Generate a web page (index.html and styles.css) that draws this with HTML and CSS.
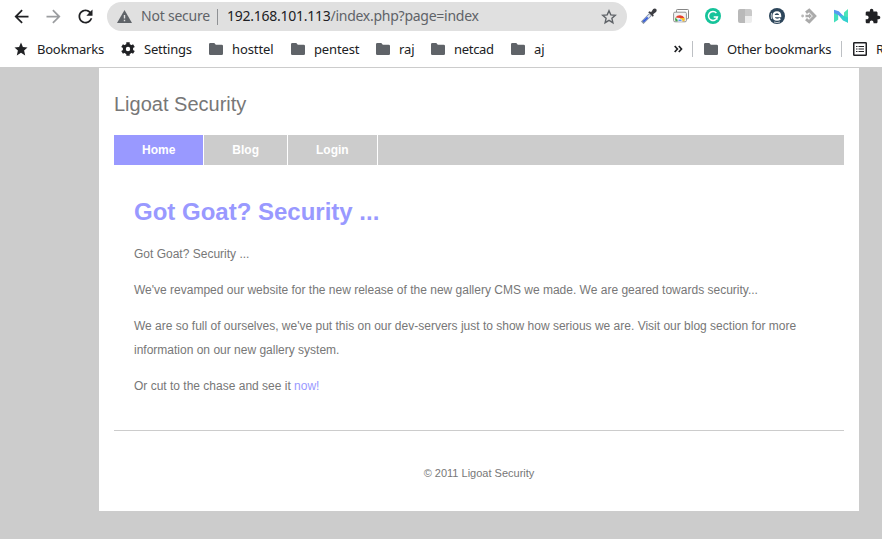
FILE: index.html
```html
<!DOCTYPE html>
<html lang="en">
<head>
<meta charset="utf-8">
<title>Ligoat Security</title>
<link rel="stylesheet" href="styles.css">
</head>
<body>
<svg width="0" height="0" class="defs">
  <symbol id="folder" viewBox="0 0 14 12"><path d="M0 1.3Q0 0 1.3 0H5.3L6.8 1.7H12.7Q14 1.7 14 3V10.7Q14 12 12.7 12H1.3Q0 12 0 10.7Z"/></symbol>
</svg>
<header class="browser">
  <div class="toolbar">
    <div class="nav">
      <svg width="21" height="21" viewBox="0 0 24 24"><path fill="#202124" d="M20 11H7.83l5.59-5.59L12 4l-8 8 8 8 1.41-1.41L7.83 13H20v-2z"/></svg>
      <svg width="21" height="21" viewBox="0 0 24 24"><path fill="#9b9da0" d="M12 4l-1.41 1.41L16.17 11H4v2h12.17l-5.58 5.59L12 20l8-8z"/></svg>
      <svg width="21" height="21" viewBox="0 0 24 24"><path fill="#202124" d="M17.65 6.35C16.2 4.9 14.21 4 12 4c-4.42 0-7.99 3.58-7.99 8s3.57 8 7.99 8c3.73 0 6.84-2.55 7.73-6h-2.08c-.82 2.33-3.04 4-5.65 4-3.31 0-6-2.69-6-6s2.69-6 6-6c1.66 0 3.14.69 4.22 1.78L13 11h7V4l-2.35 2.35z"/></svg>
    </div>
    <div class="omnibox">
      <svg class="warn" width="15" height="13" viewBox="0 0 15 13"><path fill="#5f6368" d="M7.5 0L15 13H0Z"/><path fill="#e0e0e0" d="M6.8 5H8.2V8.6H6.8ZM6.8 9.8H8.2V11.2H6.8Z"/></svg>
      <span class="insecure">Not secure</span>
      <span class="rule"></span>
      <span class="url"><b>192.168.101.113</b>/index.php?page=index</span>
      <svg class="fav" width="16" height="16" viewBox="0 0 16 16"><path fill="none" stroke="#5f6368" stroke-width="1.4" d="M8 1.8L9.8 5.9L14.3 6.3L10.9 9.3L11.9 13.7L8 11.4L4.1 13.7L5.1 9.3L1.7 6.3L6.2 5.9Z"/></svg>
    </div>
    <div class="extensions">
      <svg viewBox="0 0 16 16"><path stroke="#8290a8" stroke-width="3.6" d="M1.2 14.8L9.2 6.8"/><path stroke="#e3e9f5" stroke-width="1.8" d="M3 13L9 7"/><path stroke="#3158dd" stroke-width="1.8" d="M2.4 13.6L6.7 9.3"/><path fill="#3c3d42" d="M7.2 4.2L8.7 3.3L10.1 4.2L12.2 1Q14 0 15.2 1.1Q16.2 2.5 15 4.1L12.1 6.3L12.8 7.7L11.7 8.8Z"/></svg>
      <svg viewBox="0 0 16 16"><path fill="#fff" stroke="#858585" d="M3.5 4V2.3Q3.5 1.5 4.3 1.5H14.7Q15.5 1.5 15.5 2.3V10Q15.5 10.7 14.7 10.7H13"/><rect x=".6" y="4.2" width="12.8" height="9.6" rx="1.3" fill="#f3f3f3" stroke="#929292"/><path fill="#e4402f" d="M2.4 9.6Q4 7.2 7 7.2T11.6 9.9H7Z"/><path fill="#40a34b" d="M2.4 9.6L6 13.3H2.6Q1.6 11.5 2.4 9.6Z"/><path fill="#fbc02d" d="M7 9.9H11.6Q12.2 11.6 11.4 13.3H7Z"/><path fill="#4285f4" stroke="#fff" stroke-width=".7" d="M4.8 13.3A2.2 2.2 0 1 1 9.2 13.3Z"/></svg>
      <svg viewBox="0 0 16 16"><circle cx="8" cy="8" r="8" fill="#15c39a"/><path fill="none" stroke="#fff" stroke-width="1.5" d="M11.4 5A4.5 4.5 0 1 0 12.4 9H8.7M11.8 8.5V11.7"/></svg>
      <svg viewBox="0 0 16 16"><path fill="#b9b9b9" d="M3 1H8V15H3Q1 15 1 13V3Q1 1 3 1Z"/><path fill="#c9c9c9" d="M8 1H13Q15 1 15 3V8H8Z"/><path fill="#ededed" d="M8 8H15V13Q15 15 13 15H8Z"/></svg>
      <svg viewBox="0 0 16 16"><circle cx="8" cy="8" r="8" fill="#2d465b"/><path fill="none" stroke="#fff" stroke-width="2.1" d="M4.6 8.1H11.2Q11.2 4.2 8 4.2Q4.5 4.2 4.5 8Q4.5 11.6 8 11.8Q10 11.8 11.2 10.6"/><path fill="none" stroke="#fff" stroke-width=".7" d="M2.7 5Q1.6 8 2.7 11M5 14Q8 15.2 11 14"/></svg>
      <svg viewBox="0 0 16 16"><path fill="none" stroke="#aaa" stroke-width="3" d="M5 4.7L8.2 2.2L13.8 8L8.2 13.8L5 11.2"/><path fill="#aaa" d="M4.5 6.8H8V5.3L11 8L8 10.7V9.2H4.5Z"/><circle cx="1.6" cy="8" r="1.4" fill="#b8b8b8"/></svg>
      <svg viewBox="0 0 16 16"><path fill="#43dfbd" d="M1 2L5.2 5V11.8L1 14.6Z"/><path fill="#4be4b7" d="M11 4.4L15 1V14.8L11 12Z"/><path fill="#5699f1" d="M1 1.8L5.8 3.2L11 8.6V12.2L5.2 7L1 5Z"/><path fill="#31d0ce" d="M9.8 7.4L15 9.5V14.8L10 12.4L6.5 8.2Z"/></svg>
      <svg class="puzzle" viewBox="1 0 23 23"><path fill="#202124" d="M20.5 11H19V7c0-1.1-.9-2-2-2h-4V3.5C13 2.12 11.88 1 10.5 1S8 2.12 8 3.5V5H4c-1.1 0-1.99.9-1.99 2v3.8H3.5c1.49 0 2.7 1.21 2.7 2.7s-1.21 2.7-2.7 2.7H2V20c0 1.1.9 2 2 2h3.8v-1.5c0-1.49 1.21-2.7 2.7-2.7 1.49 0 2.7 1.21 2.7 2.7V22H17c1.1 0 2-.9 2-2v-4h1.5c1.38 0 2.5-1.12 2.5-2.5S21.88 11 20.5 11z"/></svg>
    </div>
  </div>
  <nav class="bookmarks">
    <div class="item w-bookmarks"><svg width="14" height="14" viewBox="0 0 14 14"><path fill="#202124" d="M7 .5L8.9 5L13.5 5.4L10.1 8.6L11.2 13.4L7 10.8L2.8 13.4L3.9 8.6L.5 5.4L5.1 5Z"/></svg><span>Bookmarks</span></div>
    <div class="item w-settings"><svg width="14" height="14" viewBox="0 0 14 14"><circle cx="7" cy="7" r="3.7" fill="none" stroke="#202124" stroke-width="3"/><path stroke="#202124" stroke-width="3.4" d="M7 .2V2.8M7 11.2V13.8M1.1 3.6L3.3 4.9M10.7 9.1L12.9 10.4M1.1 10.4L3.3 9.1M10.7 4.9L12.9 3.6"/></svg><span>Settings</span></div>
    <div class="item w-hosttel"><svg class="folder"><use href="#folder"/></svg><span>hosttel</span></div>
    <div class="item w-pentest"><svg class="folder"><use href="#folder"/></svg><span>pentest</span></div>
    <div class="item w-raj"><svg class="folder"><use href="#folder"/></svg><span>raj</span></div>
    <div class="item w-netcad"><svg class="folder"><use href="#folder"/></svg><span>netcad</span></div>
    <div class="item w-aj"><svg class="folder"><use href="#folder"/></svg><span>aj</span></div>
    <svg class="more" width="9" height="8" viewBox="0 0 9 8"><path fill="none" stroke="#202124" stroke-width="1.7" d="M.7 1L3.4 4L.7 7M4.8 1L7.5 4L4.8 7"/></svg>
    <span class="divider"></span>
    <div class="item w-other"><svg class="folder"><use href="#folder"/></svg><span>Other bookmarks</span></div>
    <span class="divider"></span>
    <div class="item w-reading"><svg width="14" height="14" viewBox="0 0 14 14"><rect x=".75" y=".75" width="12.5" height="12.5" rx=".6" fill="none" stroke="#202124" stroke-width="1.5"/><path stroke="#202124" stroke-width="1.2" d="M3 4.5H4.5M5.5 4.5H11M3 7H4.5M5.5 7H11M3 9.5H4.5M5.5 9.5H11"/></svg><span>R</span></div>
  </nav>
</header>
<main class="page">
  <div class="site-title">Ligoat Security</div>
  <nav class="menu">
    <a class="active">Home</a><a>Blog</a><a>Login</a>
  </nav>
  <section class="content">
    <h1>Got Goat? Security ...</h1>
    <p>Got Goat? Security ...</p>
    <p>We've revamped our website for the new release of the new gallery CMS we made. We are geared towards security...</p>
    <p>We are so full of ourselves, we've put this on our dev-servers just to show how serious we are. Visit our blog section for more information on our new gallery system.</p>
    <p>Or cut to the chase and see it <a>now!</a></p>
  </section>
  <footer>© 2011 Ligoat Security</footer>
</main>
</body>
</html>
```
FILE: styles.css
```css
* { box-sizing: border-box; }
body {
  margin: 0;
  height: 539px;
  overflow: hidden;
  background: #ccc;
  font-family: "Liberation Sans", Arial, sans-serif;
  font-size: 12px;
  color: #777;
}
svg { display: block; flex: none; }
.defs { position: absolute; }

.browser {
  height: 68px;
  background: #fff;
  border-bottom: 1px solid #ccc;
  font-family: "Noto Sans", sans-serif;
  color: #202124;
  overflow: hidden;
  white-space: nowrap;
}
.toolbar { display: flex; align-items: center; height: 32px; }
.nav { display: flex; gap: 11px; width: 107px; flex: none; padding-left: 10.5px; }
.omnibox {
  display: flex;
  align-items: center;
  width: 520px;
  height: 29px;
  flex: none;
  margin-top: 1px;
  padding: 0 10px;
  border-radius: 15px;
  background: #e0e0e0;
  font-size: 14px;
  line-height: 28px;
}
.omnibox span { padding-bottom: 1px; }
.insecure { width: 76px; margin-left: 9px; width: 67px; color: #5f6368; letter-spacing: -.22px; }
.rule { width: 1px; height: 16px; margin: 0 9px; background: #8f9194; }
.url { flex: 1; color: #5f6368; letter-spacing: -.26px; }
.url b { font-weight: normal; color: #202124; }
.extensions { display: flex; gap: 16px; flex: none; margin-left: 14px; }
.extensions svg { width: 16px; height: 16px; }

.bookmarks { display: flex; align-items: center; height: 34px; padding-left: 14px; font-size: 13px; line-height: 20px; }
.item { display: flex; align-items: center; gap: 9px; flex: none; }
.item span { height: 21px; }
.folder { width: 14px; height: 12px; fill: #5f6368; }
.w-bookmarks { width: 107px; letter-spacing: -.25px; }
.w-settings { width: 88px; letter-spacing: -.2px; }
.w-hosttel { width: 82px; letter-spacing: -.1px; }
.w-pentest { width: 85px; letter-spacing: -.15px; }
.w-raj { width: 55px; letter-spacing: -.1px; }
.w-netcad { width: 80px; letter-spacing: -.3px; }
.w-aj { width: 163px; }
.w-other { width: 137px; margin-left: 11px; letter-spacing: -.23px; }
.w-reading { margin-left: 11px; }
.more { margin-right: 9px; }
.divider { width: 1px; height: 16px; flex: none; background: #bdc0c4; }

.page { width: 760px; height: 443px; margin-left: 99px; padding: 0 15px; background: #fff; }
.site-title { height: 67px; padding-top: 24px; font-size: 20px; line-height: 24px; }
.menu { display: flex; height: 30px; background: #ccc; }
.menu a {
  padding: 0 28px;
  border-right: 1px solid #fff;
  color: #fff;
  font-weight: bold;
  line-height: 30px;
}
.menu .active { background: #99f; }
.content { height: 266px; padding: 32px 20px 0; border-bottom: 1px solid #ccc; }
h1 { margin: 0 0 15px; color: #99f; font-size: 24px; line-height: 30px; }
p { margin: 0 0 12px; line-height: 24px; }
p a { color: #99f; }
footer { padding-top: 36px; font-size: 11px; line-height: 13px; text-align: center; }
```
